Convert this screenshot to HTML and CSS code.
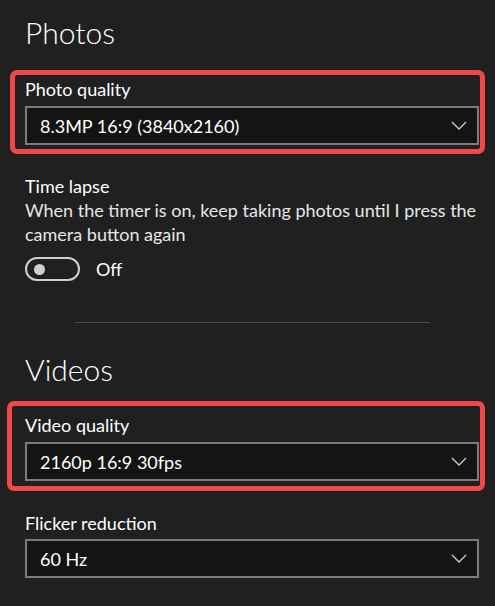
FILE: index.html
```html
<!DOCTYPE html>
<html lang="en">
<head>
<meta charset="utf-8">
<title>Camera settings</title>
<link rel="stylesheet" href="styles.css">
</head>
<body>
<main class="settings">
  <h2 class="section-title">Photos</h2>

  <div class="field highlight highlight-photo">
    <div class="field-label">Photo quality</div>
    <div class="select">
      <span class="select-value">8.3MP 16:9 (3840x2160)</span>
      <svg class="chevron" width="16" height="9" viewBox="0 0 16 9"><polyline points="1,1 8,8 15,1" fill="none" stroke="#cfcfcf" stroke-width="1.3"/></svg>
    </div>
  </div>

  <div class="field timelapse">
    <div class="field-label">Time lapse</div>
    <p class="field-desc">When the timer is on, keep taking photos until I press the camera button again</p>
    <div class="toggle-row">
      <span class="toggle"><span class="knob"></span></span>
      <span class="toggle-text">Off</span>
    </div>
  </div>

  <hr class="divider">

  <h2 class="section-title videos-title">Videos</h2>

  <div class="field highlight highlight-video">
    <div class="field-label">Video quality</div>
    <div class="select">
      <span class="select-value">2160p 16:9 30fps</span>
      <svg class="chevron" width="16" height="9" viewBox="0 0 16 9"><polyline points="1,1 8,8 15,1" fill="none" stroke="#cfcfcf" stroke-width="1.3"/></svg>
    </div>
  </div>

  <div class="field flicker">
    <div class="field-label">Flicker reduction</div>
    <div class="select">
      <span class="select-value">60 Hz</span>
      <svg class="chevron" width="16" height="9" viewBox="0 0 16 9"><polyline points="1,1 8,8 15,1" fill="none" stroke="#cfcfcf" stroke-width="1.3"/></svg>
    </div>
  </div>
</main>
</body>
</html>
```

FILE: styles.css
```css
html, body {
  margin: 0;
  padding: 0;
  background: #202020;
}

body {
  font-family: Lato, "Open Sans", sans-serif;
  font-size: 18px;
  line-height: 24px;
  color: #ffffff;
  height: 606px;
  overflow: hidden;
}

.settings {
  display: flex;
  flex-direction: column;
  padding: 12px 16px 0 25px;
}

.section-title {
  margin: 0;
  font-size: 30px;
  line-height: 40px;
  font-weight: 300;
  color: #ffffff;
}

.videos-title {
  margin-top: 26px;
}

.field {
  display: flex;
  flex-direction: column;
}

.field-label {
  color: #ffffff;
}

.highlight {
  border: 5px solid #f04848;
  border-radius: 7px;
  gap: 5px;
}

.highlight-photo {
  margin: 18px -6px 0 -15px;
  padding: 2px 1px 4px 10px;
}

.highlight-video {
  margin: 12px -6px 0 -18px;
  padding: 7px 1px 5px 13px;
}

.select {
  height: 39px;
  box-sizing: border-box;
  border: 2px solid #7b7b7b;
  background: #141414;
  display: flex;
  align-items: center;
  justify-content: space-between;
  padding: 0 10px 0 13px;
}

.select-value {
  color: #ffffff;
}

.chevron {
  display: block;
}

.timelapse {
  margin-top: 20px;
}

.field-desc {
  margin: 0;
  color: #e6e6e6;
}

.toggle-row {
  display: flex;
  align-items: center;
  gap: 16px;
  margin-top: 11px;
}

.toggle {
  width: 55px;
  height: 24px;
  box-sizing: border-box;
  border: 2px solid #cfcfcf;
  border-radius: 12px;
  display: flex;
  align-items: center;
  padding-left: 7px;
}

.knob {
  width: 11px;
  height: 11px;
  border-radius: 50%;
  background: #d0d0d0;
}

.toggle-text {
  color: #ffffff;
}

.divider {
  border: none;
  border-top: 1px solid #4d4d4d;
  margin: 41px 49px 0 50px;
  height: 0;
}

.flicker {
  margin-top: 20px;
  gap: 4px;
}
```
